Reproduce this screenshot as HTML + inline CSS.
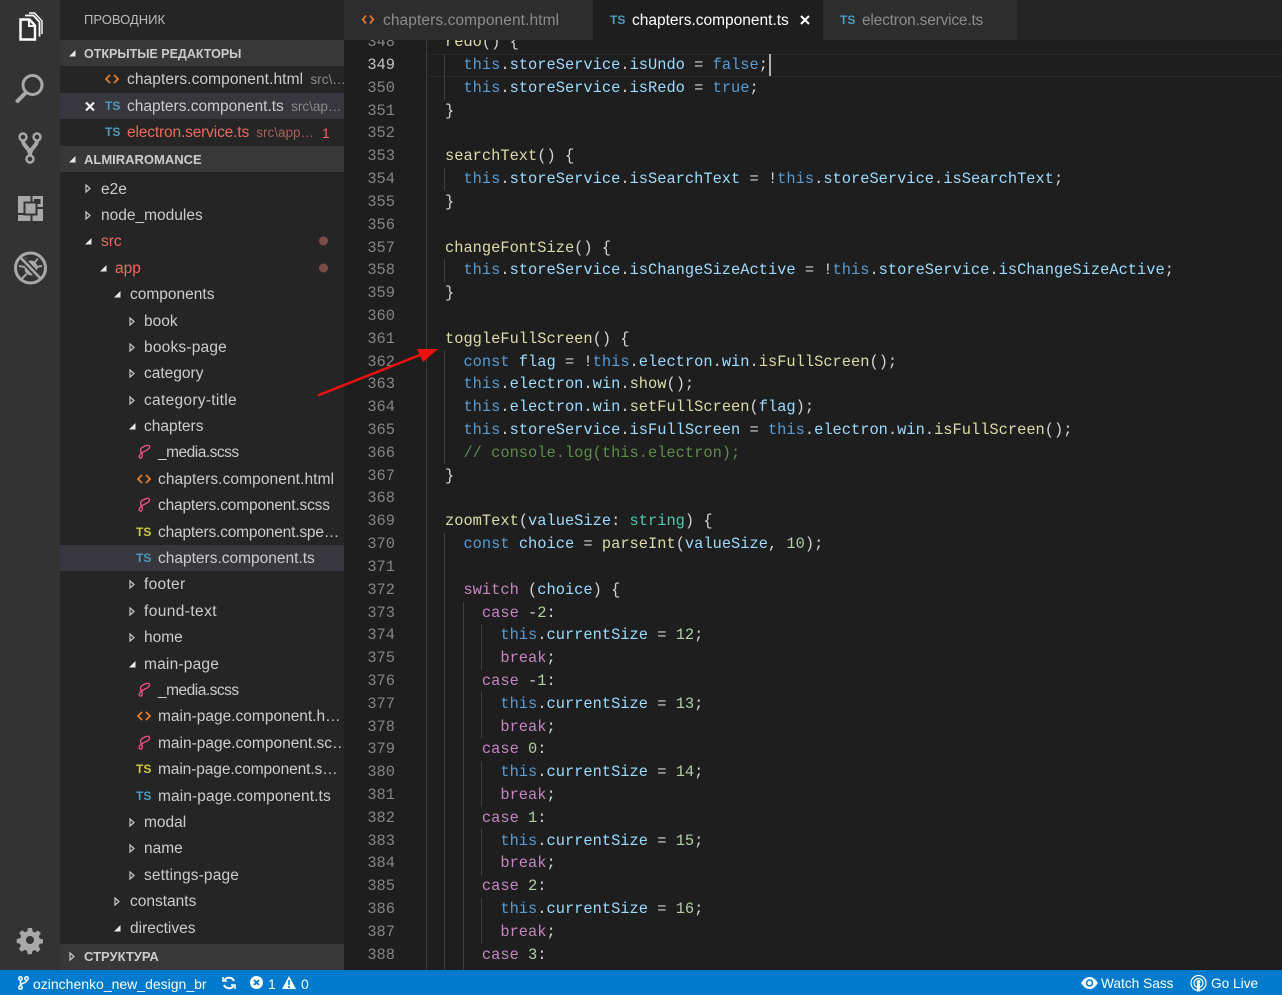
<!DOCTYPE html>
<html lang="ru">
<head>
<meta charset="utf-8">
<title>chapters.component.ts</title>
<style>
html,body{margin:0;padding:0;width:1282px;height:995px;overflow:hidden;background:#1e1e1e}
body{position:relative;font-family:"Liberation Sans",sans-serif;font-size:15.5px;color:#ccc}
svg{position:absolute;overflow:visible}
#act{position:absolute;left:0;top:0;width:60px;height:970px;background:#333}
#side{position:absolute;left:60px;top:0;width:284px;height:970px;background:#252526;overflow:hidden}
#tabs{position:absolute;left:344px;top:0;width:938px;height:40px;background:#252526}
.tab{position:absolute;top:0;height:40px;background:#2d2d2d;line-height:42px;color:#8c8c8c;white-space:nowrap}
.tab span{position:absolute;top:0}
#ed{position:absolute;left:344px;top:40px;width:938px;height:930px;background:#1e1e1e;overflow:hidden}
#status{position:absolute;left:0;top:970px;width:1282px;height:25px;background:#007acc;color:#fff;font-size:14px;line-height:28px}
#status span{position:absolute;top:0;white-space:nowrap}
.hd{position:absolute;left:0;width:284px;height:26px;background:#383838;color:#cccccc;font-weight:bold;font-size:13px;line-height:27px}
.hd b{position:absolute;left:24px;top:0}
.r{position:absolute;height:26px;line-height:28px;white-space:nowrap;color:#cccccc}
.red{color:#f1695d}
.dim{color:#8b8b8b;font-size:13.5px;margin-left:3px;letter-spacing:0}
.ts{position:absolute;font-weight:bold;font-size:12px;line-height:14px;color:#519aba;letter-spacing:0}
.y{color:#cbcb41}
.sel{position:absolute;left:0;width:284px;height:26px;background:#37373d}
#nums{position:absolute;left:0;top:-8.8px;width:51px;text-align:right;color:#858585}
#nums div,#code div{height:22.82px;line-height:22.82px}
#code{position:absolute;left:101px;top:-8.8px;color:#d4d4d4}
#code div{white-space:pre}
#nums,#code{font-family:"Liberation Mono",monospace;font-size:15.38px}
.g{position:absolute;width:1px;background:#404040}
.k{color:#569cd6}.p{color:#9cdcfe}.f{color:#dcdcaa}.c{color:#c586c0}.n{color:#b5cea8}.t{color:#4ec9b0}.m{color:#608b4e}
</style>
</head>
<body>
<div id="act">
<svg style="left:0;top:0" width="60" height="300" fill="none">
<g stroke="#fff"><path d="M20.500 19.500h9l5.500 6v14H20.500z" stroke-width="2.400"/><path d="M29 19.500v6.500h6" stroke-width="2"/><path d="M25 15.500h8.500l6 6.500v14.500" stroke-width="1.800"/><path d="M29 13h5.500l7.500 8v13" stroke-width="1.400"/></g>
<g stroke="#a8a8a8"><circle cx="32.500" cy="85" r="9.500" stroke-width="3"/><path d="M25.500 93L17.500 101" stroke-width="4" stroke-linecap="round"/></g>
<g stroke="#a8a8a8"><circle cx="23" cy="137" r="3.500" stroke-width="2.400"/><circle cx="37" cy="137" r="3.500" stroke-width="2.400"/><circle cx="30" cy="159" r="3.500" stroke-width="2.400"/><path d="M23 141c0 5 7 7 7 14M37 141c0 5-7 7-7 14" stroke-width="4"/></g>
<path fill="#a8a8a8" d="M18 196h25v25H18z"/>
<path fill="#333" d="M30.500 196h2v6h-2zM30.500 214h2v7h-2zM18 213h6v2h-6zM37 207h6v2h-6zM34 199h6.500v5H34z"/>
<path fill="#a8a8a8" stroke="#333" stroke-width="2" d="M24.500 202.500h12v12h-12z"/>
<g fill="#a8a8a8"><ellipse cx="31" cy="268" rx="6.500" ry="7.500"/><path d="M19 265l6 1v2l-6-1zM42 265l-6 1v2l6-1zM21 278l5-5 1 2-5 5zM39 279l-5-6-1 2 5 5zM25 257l3 4-1.500 1-3-4zM37 258l-3 4 1.500 1 3-4z"/></g>
<path d="M20 257l21 22" stroke="#333" stroke-width="6"/>
<path d="M20 257l21 22" stroke="#a8a8a8" stroke-width="2.600"/>
<circle cx="30.500" cy="268" r="15" stroke="#a8a8a8" stroke-width="3"/>
</svg>
<svg style="left:18px;top:928px" width="24" height="24" viewBox="0 0 24 24"><g fill="#a8a8a8"><path d="M10 0h4l.7 3.500 2.300 1 3-2 2.800 2.800-2 3 1 2.300 3.200.7v4l-3.500.7-1 2.300 2 3-2.800 2.800-3-2-2.300 1-.7 3.200h-4l-.7-3.500-2.300-1-3 2-2.800-2.800 2-3-1-2.300-3.200-.7v-4l3.500-.7 1-2.300-2-3 2.800-2.800 3 2 2.300-1z"/></g><circle cx="12" cy="12" r="4" fill="#333"/></svg>
</div>

<div id="side">
<span style="position:absolute;left:24px;top:12px;font-size:13px;line-height:15px;color:#bbbbbb">ПРОВОДНИК</span>

<div class="hd" style="top:40px;font-size:12.5px;line-height:28px"><b>ОТКРЫТЫЕ РЕДАКТОРЫ</b></div>
<div class="sel" style="top:93px"></div>
<div class="hd" style="top:146px"><b>ALMIRAROMANCE</b></div>
<div class="hd" style="top:944px;line-height:26px"><b>СТРУКТУРА</b></div>
<div class="sel" style="top:545px"></div>

<svg style="left:0;top:0" width="284" height="970">
<defs>
<path id="o" d="M0 0L4 3.500L0 7z" fill="none" stroke="#c8c8c8" stroke-width="1.200"/>
<path id="e" d="M6.500 0V6.500H0z" fill="#e8e8e8"/>
<g id="h" fill="none" stroke="#e37933" stroke-width="1.800"><path d="M4 0L0 4l4 4M8 0l4 4-4 4"/></g>
<path id="s" d="M8 1c3-1.500 5-.5 4.500 1.500C12 5 7 6 4.500 8 2 10 1.500 12 3 13c1.500.5 2.500-1 2.300-3C5 8.500 3.500 7 3.500 5 3.500 3 5.500 2 8 1z" fill="none" stroke="#f55385" stroke-width="1.300"/>
</defs>
<use href="#e" x="9" y="50"/>
<use href="#e" x="9" y="156"/>
<use href="#o" x="26" y="185"/>
<use href="#o" x="26" y="212"/>
<use href="#e" x="25" y="238"/>
<use href="#e" x="40" y="265"/>
<use href="#e" x="54" y="291"/>
<use href="#o" x="70" y="318"/>
<use href="#o" x="70" y="344"/>
<use href="#o" x="70" y="370"/>
<use href="#o" x="70" y="397"/>
<use href="#e" x="69" y="423"/>
<use href="#o" x="70" y="581"/>
<use href="#o" x="70" y="608"/>
<use href="#o" x="70" y="634"/>
<use href="#e" x="69" y="661"/>
<use href="#o" x="70" y="819"/>
<use href="#o" x="70" y="845"/>
<use href="#o" x="70" y="872"/>
<use href="#o" x="55" y="898"/>
<use href="#e" x="54" y="925"/>
<use href="#o" x="10" y="953"/>
<use href="#h" x="46" y="75"/>
<use href="#h" x="78" y="475"/>
<use href="#h" x="78" y="712"/>
<use href="#s" x="77" y="445"/>
<use href="#s" x="77" y="498"/>
<use href="#s" x="77" y="683"/>
<use href="#s" x="77" y="736"/>
<path d="M26 102.500l8 8M34 102.500l-8 8" stroke="#f0f0f0" stroke-width="2.200"/>
<circle cx="263.500" cy="241" r="4.500" fill="#7c4d48"/>
<circle cx="263.500" cy="268" r="4.500" fill="#7c4d48"/>
</svg>

<span class="ts" style="left:45px;top:99px">TS</span>
<span class="ts" style="left:45px;top:125px">TS</span>
<span class="ts y" style="left:76px;top:525px">TS</span>
<span class="ts" style="left:76px;top:551px">TS</span>
<span class="ts y" style="left:76px;top:762px">TS</span>
<span class="ts" style="left:76px;top:789px">TS</span>

<div class="r" style="left:67px;top:66px;letter-spacing:.09px">chapters.component.html <span class="dim">src\…</span></div>
<div class="r" style="left:67px;top:93px">chapters.component.ts <span class="dim">src\ap…</span></div>
<div class="r red" style="left:67px;top:119px;letter-spacing:-.15px">electron.service.ts <span class="dim" style="color:#a5625b">src\app…</span></div>
<div class="r red" style="left:262px;top:119px;font-size:14px">1</div>

<div class="r" style="left:41px;top:176px">e2e</div>
<div class="r" style="left:41px;top:202px">node_modules</div>
<div class="r red" style="left:41px;top:228px">src</div>
<div class="r red" style="left:55px;top:255px">app</div>
<div class="r" style="left:70px;top:281px">components</div>
<div class="r" style="left:84px;top:308px">book</div>
<div class="r" style="left:84px;top:334px;letter-spacing:.2px">books-page</div>
<div class="r" style="left:84px;top:360px">category</div>
<div class="r" style="left:84px;top:387px;letter-spacing:.3px">category-title</div>
<div class="r" style="left:84px;top:413px">chapters</div>
<div class="r" style="left:98px;top:439px;letter-spacing:-.5px">_media.scss</div>
<div class="r" style="left:98px;top:466px;letter-spacing:.09px">chapters.component.html</div>
<div class="r" style="left:98px;top:492px;letter-spacing:-.17px">chapters.component.scss</div>
<div class="r" style="left:98px;top:519px;letter-spacing:-.18px">chapters.component.spe…</div>
<div class="r" style="left:98px;top:545px">chapters.component.ts</div>
<div class="r" style="left:84px;top:571px;letter-spacing:.3px">footer</div>
<div class="r" style="left:84px;top:598px;letter-spacing:.4px">found-text</div>
<div class="r" style="left:84px;top:624px">home</div>
<div class="r" style="left:84px;top:651px;letter-spacing:.2px">main-page</div>
<div class="r" style="left:98px;top:677px;letter-spacing:-.5px">_media.scss</div>
<div class="r" style="left:98px;top:703px">main-page.component.h…</div>
<div class="r" style="left:98px;top:730px">main-page.component.sc…</div>
<div class="r" style="left:98px;top:756px;letter-spacing:-.1px">main-page.component.s…</div>
<div class="r" style="left:98px;top:783px;letter-spacing:.1px">main-page.component.ts</div>
<div class="r" style="left:84px;top:809px">modal</div>
<div class="r" style="left:84px;top:835px">name</div>
<div class="r" style="left:84px;top:862px;letter-spacing:.15px">settings-page</div>
<div class="r" style="left:70px;top:888px">constants</div>
<div class="r" style="left:70px;top:915px">directives</div>
</div>

<div id="tabs">
<div class="tab" style="left:0;width:249px"><svg style="left:18px;top:15px" width="12" height="9" fill="none" stroke="#e37933" stroke-width="1.800"><path d="M4 .5L.8 4.500l3.200 4M8 .5l3.200 4-3.200 4"/></svg><span style="left:39px;letter-spacing:.09px">chapters.component.html</span></div>
<div class="tab" style="left:249px;width:230px;background:#1e1e1e;color:#fff"><b class="ts" style="left:17px;top:13px">TS</b><span style="left:39px">chapters.component.ts</span><svg style="left:207px;top:15px" width="10" height="10"><path d="M1 1l8 8M9 1L1 9" stroke="#fff" stroke-width="2"/></svg></div>
<div class="tab" style="left:479px;width:194px"><b class="ts" style="left:17px;top:13px">TS</b><span style="left:39px;letter-spacing:-.2px">electron.service.ts</span></div>
</div>

<div id="ed">
<div style="position:absolute;left:82px;top:14px;width:856px;height:21px;border-top:1px solid #282828;border-bottom:1px solid #282828"></div>
<div class="g" style="left:82px;top:0;height:930px;background:#3a3a3a"></div>
<div class="g" style="left:100px;top:14px;height:46px"></div>
<div class="g" style="left:100px;top:128px;height:23px"></div>
<div class="g" style="left:100px;top:219px;height:23px"></div>
<div class="g" style="left:100px;top:310px;height:114px"></div>
<div class="g" style="left:100px;top:493px;height:437px"></div>
<div class="g" style="left:119px;top:562px;height:368px"></div>
<div class="g" style="left:137px;top:584px;height:46px"></div>
<div class="g" style="left:137px;top:652px;height:46px"></div>
<div class="g" style="left:137px;top:721px;height:46px"></div>
<div class="g" style="left:137px;top:789px;height:46px"></div>
<div class="g" style="left:137px;top:858px;height:46px"></div>
<div id="nums">
<div>348</div><div style="color:#c6c6c6">349</div><div>350</div><div>351</div><div>352</div><div>353</div><div>354</div><div>355</div><div>356</div><div>357</div><div>358</div><div>359</div><div>360</div><div>361</div><div>362</div><div>363</div><div>364</div><div>365</div><div>366</div><div>367</div><div>368</div><div>369</div><div>370</div><div>371</div><div>372</div><div>373</div><div>374</div><div>375</div><div>376</div><div>377</div><div>378</div><div>379</div><div>380</div><div>381</div><div>382</div><div>383</div><div>384</div><div>385</div><div>386</div><div>387</div><div>388</div>
</div>
<div id="code">
<div><span class="f">redo</span>() {</div>
<div>  <span class="k">this</span>.<span class="p">storeService</span>.<span class="p">isUndo</span> = <span class="k">false</span>;</div>
<div>  <span class="k">this</span>.<span class="p">storeService</span>.<span class="p">isRedo</span> = <span class="k">true</span>;</div>
<div>}</div>
<div> </div>
<div><span class="f">searchText</span>() {</div>
<div>  <span class="k">this</span>.<span class="p">storeService</span>.<span class="p">isSearchText</span> = !<span class="k">this</span>.<span class="p">storeService</span>.<span class="p">isSearchText</span>;</div>
<div>}</div>
<div> </div>
<div><span class="f">changeFontSize</span>() {</div>
<div>  <span class="k">this</span>.<span class="p">storeService</span>.<span class="p">isChangeSizeActive</span> = !<span class="k">this</span>.<span class="p">storeService</span>.<span class="p">isChangeSizeActive</span>;</div>
<div>}</div>
<div> </div>
<div><span class="f">toggleFullScreen</span>() {</div>
<div>  <span class="k">const</span> <span class="p">flag</span> = !<span class="k">this</span>.<span class="p">electron</span>.<span class="p">win</span>.<span class="f">isFullScreen</span>();</div>
<div>  <span class="k">this</span>.<span class="p">electron</span>.<span class="p">win</span>.<span class="f">show</span>();</div>
<div>  <span class="k">this</span>.<span class="p">electron</span>.<span class="p">win</span>.<span class="f">setFullScreen</span>(<span class="p">flag</span>);</div>
<div>  <span class="k">this</span>.<span class="p">storeService</span>.<span class="p">isFullScreen</span> = <span class="k">this</span>.<span class="p">electron</span>.<span class="p">win</span>.<span class="f">isFullScreen</span>();</div>
<div>  <span class="m">// console.log(this.electron);</span></div>
<div>}</div>
<div> </div>
<div><span class="f">zoomText</span>(<span class="p">valueSize</span>: <span class="t">string</span>) {</div>
<div>  <span class="k">const</span> <span class="p">choice</span> = <span class="f">parseInt</span>(<span class="p">valueSize</span>, <span class="n">10</span>);</div>
<div> </div>
<div>  <span class="c">switch</span> (<span class="p">choice</span>) {</div>
<div>    <span class="c">case</span> -<span class="n">2</span>:</div>
<div>      <span class="k">this</span>.<span class="p">currentSize</span> = <span class="n">12</span>;</div>
<div>      <span class="c">break</span>;</div>
<div>    <span class="c">case</span> -<span class="n">1</span>:</div>
<div>      <span class="k">this</span>.<span class="p">currentSize</span> = <span class="n">13</span>;</div>
<div>      <span class="c">break</span>;</div>
<div>    <span class="c">case</span> <span class="n">0</span>:</div>
<div>      <span class="k">this</span>.<span class="p">currentSize</span> = <span class="n">14</span>;</div>
<div>      <span class="c">break</span>;</div>
<div>    <span class="c">case</span> <span class="n">1</span>:</div>
<div>      <span class="k">this</span>.<span class="p">currentSize</span> = <span class="n">15</span>;</div>
<div>      <span class="c">break</span>;</div>
<div>    <span class="c">case</span> <span class="n">2</span>:</div>
<div>      <span class="k">this</span>.<span class="p">currentSize</span> = <span class="n">16</span>;</div>
<div>      <span class="c">break</span>;</div>
<div>    <span class="c">case</span> <span class="n">3</span>:</div>
</div>
<div style="position:absolute;left:425px;top:14px;width:2px;height:22px;background:#aeafad"></div>
</div>

<svg style="left:0;top:0;pointer-events:none" width="1282" height="995">
<path d="M319 395L420 355" stroke="#f01010" stroke-width="2.500" stroke-linecap="round"/>
<path d="M438 349L423 362L417 349z" fill="#f01010"/>
</svg>

<div id="status">
<svg style="left:18px;top:6px" width="11" height="14" fill="none" stroke="#fff" stroke-width="1.500"><circle cx="2.500" cy="2.500" r="1.700"/><circle cx="8.500" cy="2.500" r="1.700"/><circle cx="2.500" cy="11.500" r="1.700"/><path d="M2.500 4.500v5M8.500 4.500c0 3-6 2.500-6 5"/></svg>
<span style="left:33px">ozinchenko_new_design_br</span>
<svg style="left:222px;top:6px" width="14" height="14" fill="none" stroke="#fff" stroke-width="2"><path d="M12 5A5.500 5.500 0 0 0 2.500 4M2 9a5.500 5.500 0 0 0 9.500 1"/><path d="M1 1v4h4M13 13V9H9" stroke-width="1.500"/></svg>
<svg style="left:250px;top:6px" width="13" height="13"><circle cx="6.500" cy="6.500" r="6.500" fill="#fff"/><path d="M4 4l5 5M9 4l-5 5" stroke="#007acc" stroke-width="1.800"/></svg>
<span style="left:268px">1</span>
<svg style="left:282px;top:6px" width="14" height="13"><path d="M7 0l7 13H0z" fill="#fff"/><path d="M7 4v5M7 10v2" stroke="#007acc" stroke-width="1.600"/></svg>
<span style="left:301px">0</span>
<svg style="left:1081px;top:7px" width="17" height="12"><path d="M0 6C3 1.500 5.500 0 8.500 0s5.500 1.500 8.500 6c-3 4.500-5.500 6-8.500 6S3 10.500 0 6z" fill="#fff"/><circle cx="8.500" cy="6" r="3.700" fill="#007acc"/><circle cx="8.500" cy="6" r="2.200" fill="#fff"/></svg>
<span style="left:1101px;font-size:13.700px">Watch Sass</span>
<svg style="left:1190px;top:5px" width="17" height="18" fill="none" stroke="#fff"><circle cx="8.500" cy="8" r="7.500" stroke-width="1.200"/><circle cx="8.500" cy="8" r="4.500" stroke-width="1.200"/><circle cx="8.500" cy="7" r="2" fill="#fff" stroke="none"/><path d="M7 9h3v7.500H7z" fill="#fff" stroke="none"/></svg>
<span style="left:1211px;font-size:13.700px">Go Live</span>
</div>
</body>
</html>
